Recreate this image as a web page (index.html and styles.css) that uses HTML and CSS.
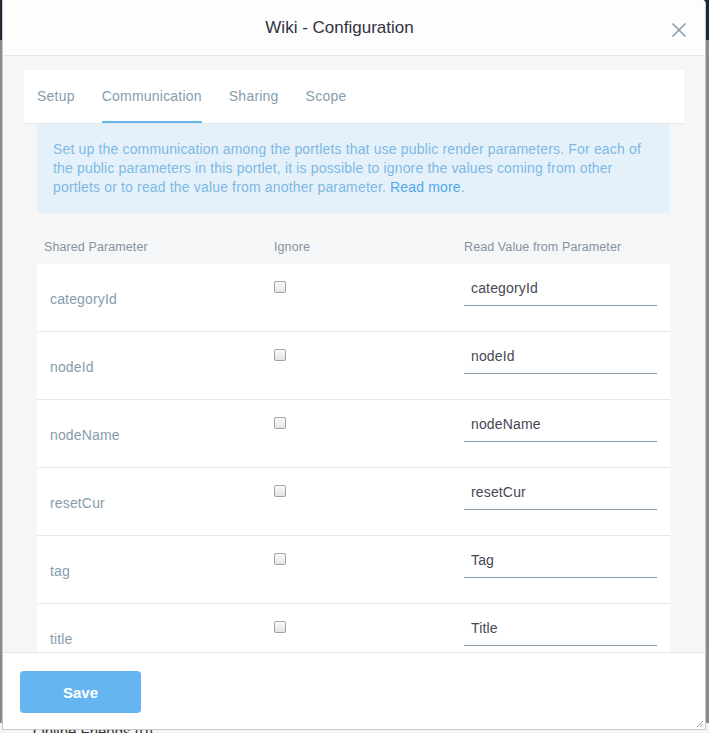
FILE: index.html
```html
<!DOCTYPE html>
<html>
<head>
<meta charset="utf-8">
<link rel="stylesheet" href="styles.css">
</head>
<body>
<div class="page">
  <div class="topbar"></div>
  <div class="backdrop"></div>
  <div class="under">Online Friends (0)</div>
</div>

<div class="modal">
  <div class="modal-header">
    <div class="modal-title">Wiki - Configuration</div>
    <button class="close" aria-label="Close">
      <svg width="16" height="16" viewBox="0 0 16 16"><path d="M1.5 1.5 L14.5 14.5 M14.5 1.5 L1.5 14.5" stroke="#8b9eaf" stroke-width="1.6" fill="none"/></svg>
    </button>
  </div>

  <div class="modal-body">
    <div class="tabs">
      <span class="tab">Setup</span>
      <span class="tab active">Communication</span>
      <span class="tab">Sharing</span>
      <span class="tab">Scope</span>
    </div>
    <div class="tab-content">
      <div class="alert">Set up the communication among the portlets that use public render parameters. For each of the public parameters in this portlet, it is possible to ignore the values coming from other portlets or to read the value from another parameter. <a class="link">Read more</a>.</div>

      <div class="thead">
        <span>Shared Parameter</span>
        <span>Ignore</span>
        <span>Read Value from Parameter</span>
      </div>

      <div class="row">
        <span class="param">categoryId</span>
        <span class="check"></span>
        <span class="field">categoryId</span>
      </div>
      <div class="row">
        <span class="param">nodeId</span>
        <span class="check"></span>
        <span class="field">nodeId</span>
      </div>
      <div class="row">
        <span class="param">nodeName</span>
        <span class="check"></span>
        <span class="field">nodeName</span>
      </div>
      <div class="row">
        <span class="param">resetCur</span>
        <span class="check"></span>
        <span class="field">resetCur</span>
      </div>
      <div class="row">
        <span class="param">tag</span>
        <span class="check"></span>
        <span class="field">Tag</span>
      </div>
      <div class="row">
        <span class="param">title</span>
        <span class="check"></span>
        <span class="field">Title</span>
      </div>
    </div>
  </div>

  <div class="modal-footer">
    <button class="save">Save</button>
  </div>

  <svg class="grip" width="8" height="8" viewBox="0 0 8 8"><path d="M7 1 L1 7 M7 4 L4 7 M7 6.5 L6.5 7" stroke="#9a9a9a" stroke-width="1" fill="none"/></svg>
</div>
</body>
</html>
```

FILE: styles.css
```css
* { box-sizing: border-box; }

html, body {
  margin: 0;
  padding: 0;
  height: 733px;
  overflow: hidden;
}

body {
  font-family: "Liberation Sans", Arial, sans-serif;
  background: #8a8a8a;
}

.page {
  display: flex;
  flex-direction: column;
  height: 733px;
}

.topbar {
  height: 40px;
  background: #1c2833;
}

.backdrop {
  flex: 1;
  background: #8a8a8a;
}

.under {
  height: 10px;
  background: #f4f4f4;
  color: #333;
  font-size: 15px;
  line-height: 18px;
  padding-left: 33px;
  overflow: hidden;
}

.modal {
  position: absolute;
  left: 2px;
  top: 0;
  width: 704px;
  height: 730px;
  background: #fff;
  border: 1px solid #c8c8c8;
  border-top: none;
  border-radius: 0 4px 0 0;
  display: flex;
  flex-direction: column;
  overflow: hidden;
}

.modal-header {
  height: 56px;
  flex: none;
  display: flex;
  align-items: center;
  background: #fdfdfe;
  border-bottom: 1px solid #e4e6ea;
}

.modal-title {
  flex: 1;
  margin-left: 24px;
  text-align: center;
  font-size: 17px;
  color: #30313f;
  padding-top: 1px;
}

.close {
  width: 53px;
  height: 40px;
  border: none;
  background: none;
  padding: 0;
  display: flex;
  align-items: center;
  justify-content: center;
  margin-top: 4px;
}

.modal-body {
  flex: 1;
  background: #f5f6f8;
  padding: 14px 21px 0;
  overflow: hidden;
}

.tabs {
  background: #fff;
  height: 54px;
  display: flex;
  gap: 27px;
  padding-left: 13px;
  border-bottom: 1px solid #e4e7eb;
}

.tab {
  font-size: 14px;
  letter-spacing: 0.22px;
  color: #869cad;
  line-height: 52px;
  height: 53px;
  border-bottom: 2px solid transparent;
}

.tab.active {
  border-bottom-color: #65b6f0;
}

.tab-content {
  padding: 0 14px 0 13px;
}

.alert {
  background: #e5f1fa;
  color: #7db9e4;
  font-size: 14px;
  letter-spacing: 0.16px;
  line-height: 19px;
  padding: 16px 26px 16px 16px;
  border-radius: 0 0 3px 3px;
}

.link {
  color: #4ea7ea;
}

.thead {
  display: grid;
  grid-template-columns: 230px 190px 1fr;
  padding: 26px 0 9px 7px;
  font-size: 12.5px;
  letter-spacing: 0.1px;
  line-height: 16px;
  color: #8593a1;
}

.row {
  display: grid;
  grid-template-columns: 237px 190px 1fr;
  height: 68px;
  background: #fff;
  border-bottom: 1px solid #e4e6ea;
}

.param {
  align-self: center;
  padding-left: 13px;
  font-size: 14px;
  letter-spacing: 0.15px;
  color: #869cad;
  padding-top: 2px;
}

.check {
  width: 12px;
  height: 12px;
  margin-top: 17px;
  border: 1px solid #a4a4a4;
  border-radius: 2px;
  background: linear-gradient(#fbfbfb, #e3e3e3);
}

.field {
  margin-top: 8px;
  width: 193px;
  height: 34px;
  border-bottom: 1px solid #869cad;
  font-size: 14px;
  letter-spacing: 0.15px;
  line-height: 33px;
  color: #474853;
  padding-left: 7px;
}

.modal-footer {
  height: 77px;
  flex: none;
  background: #fff;
  border-top: 1px solid #e4e6ea;
  padding: 18px 0 0 17px;
}

.save {
  width: 121px;
  height: 42px;
  border: none;
  border-radius: 4px;
  background: #65b6f0;
  color: #fff;
  font-family: "Liberation Sans", Arial, sans-serif;
  font-size: 15px;
  font-weight: bold;
  padding: 0;
}

.grip {
  position: absolute;
  right: 1px;
  bottom: 1px;
}
```
